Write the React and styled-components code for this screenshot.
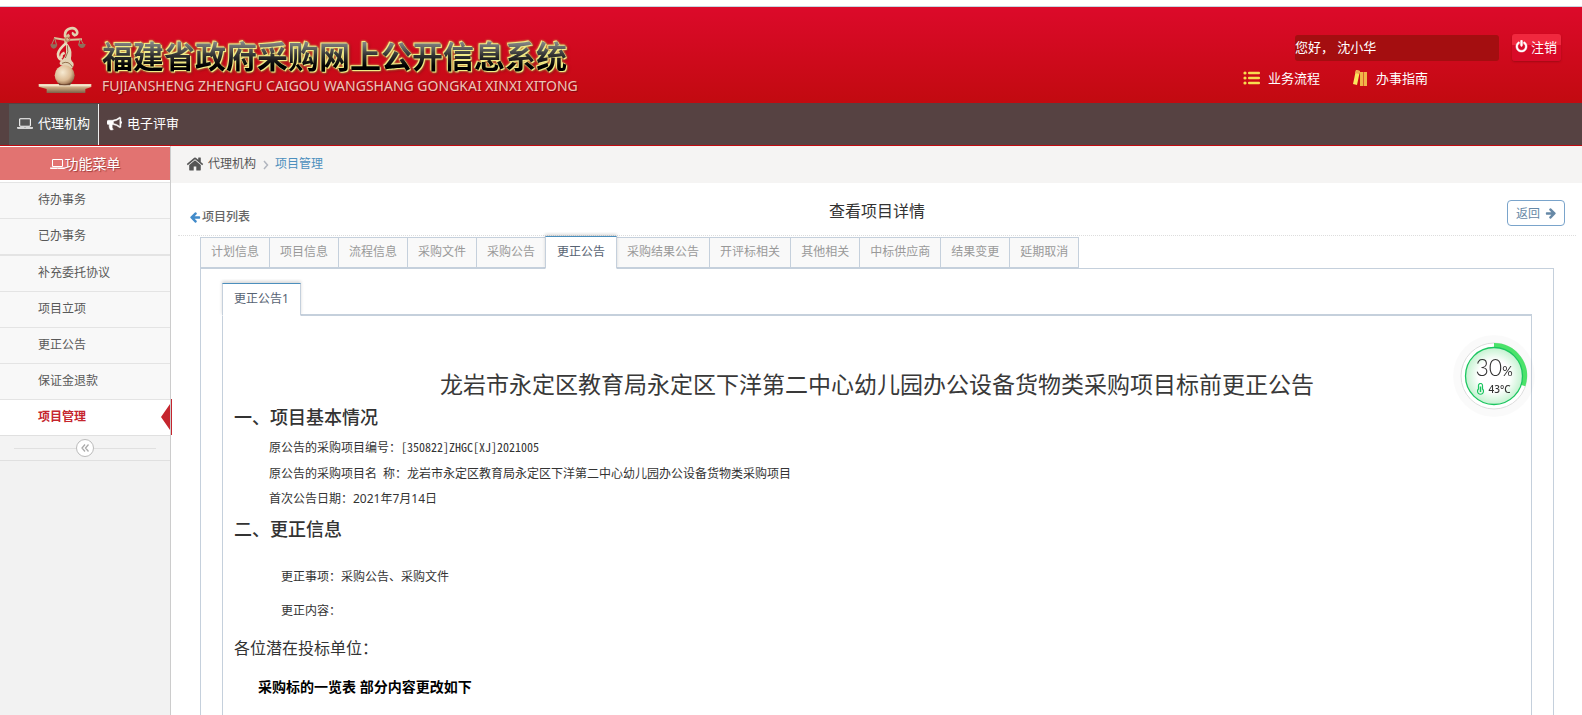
import React from 'react';
import styled, { createGlobalStyle } from 'styled-components';

const GlobalStyle = createGlobalStyle`
  * {
    box-sizing: border-box;
  }

  body {
    margin: 0;
    background: #fff;
    color: #393939;
    font-family: "Noto Sans", "Noto Sans CJK SC", sans-serif;
    font-size: 12px;
    line-height: 20px;
  }

  h1, h2, h3, p, ul {
    margin: 0;
    padding: 0;
    font-weight: normal;
  }

  ul {
    list-style: none;
  }

  a {
    color: inherit;
    text-decoration: none;
  }

  svg {
    display: block;
    flex: none;
  }

  button {
    font-family: inherit;
    cursor: pointer;
  }
`;

const Page = styled.div`
  display: flex;
  flex-direction: column;
  height: 100vh;
  padding-top: 6px;
  overflow: hidden;
`;

/* ---------- header ---------- */

const Header = styled.header`
  display: flex;
  flex: none;
  justify-content: space-between;
  height: 97px;
  padding: 0 21px 0 38px;
  border-top: 1px solid #c9d3e0;
  background: linear-gradient(#dc0a2a, #c20a10);
`;

const Brand = styled.div`
  display: flex;
  gap: 10px;
  padding-top: 19px;
`;

const BrandText = styled.div`
  padding-top: 7px;
`;

const BrandTitle = styled.h1`
  background: linear-gradient(#8a8a8a 20%, #333 50%, #000 75%);
  background-clip: text;
  color: transparent;
  font-family: "Noto Sans CJK SC", sans-serif;
  font-size: 31px;
  font-weight: bold;
  line-height: 44px;
  white-space: nowrap;
  filter: drop-shadow(1px 1px 0 #f0eb88) drop-shadow(-1px -1px 0 #f0eb88) drop-shadow(0 0 1px #e8d868) drop-shadow(1px 1px 1px #8a0a10);
`;

const BrandPinyin = styled.p`
  color: #f0c4b8;
  font-family: "Noto Sans", sans-serif;
  font-size: 14px;
  line-height: 18px;
  text-shadow: 1px 1px 1px #7a0a10;
  white-space: nowrap;
`;

const Account = styled.div`
  width: 318px;
  padding-top: 27px;
  color: #fff;
  font-size: 13px;
`;

const AccountRow = styled.div`
  display: flex;
  justify-content: flex-end;
  gap: 13px;
`;

const Greeting = styled.span`
  width: 204px;
  height: 26px;
  margin-top: 1px;
  border-radius: 3px;
  background: #a40e10;
  line-height: 25px;
`;

const LogoutButton = styled.button`
  display: flex;
  align-items: center;
  gap: 3px;
  height: 27px;
  padding: 0 4px 2px 3px;
  border: 0;
  border-radius: 3px;
  background: linear-gradient(#f0283e 40%, #d80a28 40%);
  box-shadow: 0 1px 2px #a00a14;
  color: #fff;
  font-size: 13px;
`;

const HelpLinks = styled.nav`
  display: flex;
  gap: 33px;
  padding-top: 7px;

  a {
    display: flex;
    align-items: center;
    gap: 8px;
  }
`;

const TopNav = styled.nav`
  display: flex;
  flex: none;
  height: 43px;
  padding: 1px 9px 0;
  border-bottom: 1px solid #c20a10;
  background: #564242;
`;

const TopNavLink = styled.a`
  display: flex;
  align-items: center;
  gap: 5px;
  padding: 0 8px 3px;
  border-right: 1px solid ${(props) => (props.$active ? '#eee' : 'transparent')};
  background: ${(props) => (props.$active ? '#555' : 'none')};
  color: #fff;
  font-size: 13px;
`;

/* ---------- sidebar ---------- */

const Body = styled.div`
  display: flex;
  flex: 1;
  min-height: 0;
`;

const Sidebar = styled.aside`
  flex: none;
  width: 171px;
  border-right: 1px solid #ccc;
  background: #f2f2f2;
`;

const SidebarTitle = styled.h2`
  display: flex;
  align-items: center;
  justify-content: center;
  height: 36px;
  border-top: 1px solid #fff;
  border-bottom: 2px solid #fff;
  background: #e27371;
  color: #fff;
  font-size: 14px;
  text-shadow: 1px 1px 1px #a03c3c;
`;

const MenuItem = styled.li`
  position: relative;
  height: ${(props) => (props.$divided ? 37 : 36)}px;
  padding-left: 38px;
  border-top: ${(props) => (props.$divided ? 2 : 1)}px solid #e4e4e4;
  background: ${(props) => (props.$active ? '#fff' : '#f8f8f8')};
  color: ${(props) => (props.$active ? '#c5262e' : '#585858')};
  font-weight: ${(props) => (props.$active ? 'bold' : 'normal')};
  line-height: 34px;
`;

const ActiveMark = styled.svg`
  position: absolute;
  top: -1px;
  right: -2px;
`;

const CollapseBar = styled.div`
  display: flex;
  align-items: center;
  height: 26px;
  padding: 0 14px;
  border-top: 1px solid #e0e0e0;
  border-bottom: 1px solid #e0e0e0;
  background: #f3f3f3;

  &::before,
  &::after {
    content: "";
    flex: 1;
    height: 1px;
    background: #e0e0e0;
  }
`;

const CollapseButton = styled.button`
  display: flex;
  align-items: center;
  justify-content: center;
  width: 18px;
  height: 18px;
  padding: 0;
  border: 1px solid #bbb;
  border-radius: 50%;
  background: #fff;
  color: #aaa;
`;

/* ---------- content ---------- */

const Main = styled.main`
  display: flex;
  flex: 1;
  flex-direction: column;
  min-width: 0;
`;

const Breadcrumbs = styled.nav`
  display: flex;
  flex: none;
  align-items: center;
  height: 37px;
  padding: 0 15px 1px;
  background: #f5f4f3;
  color: #555;
  gap: 4px;

  a:last-child {
    color: #4c8fbd;
  }
`;

const PageHeader = styled.div`
  display: grid;
  flex: none;
  grid-template-columns: 1fr auto 1fr;
  align-items: start;
  height: 53px;
  margin: 0 6px 0 7px;
  padding: 17px 11px 0;
  border-bottom: 1px dotted #ddd;
`;

const BackLink = styled.a`
  display: flex;
  align-items: center;
  gap: 1px;
  padding-top: 7px;
  color: #666;
  font-weight: 500;
`;

const PageTitle = styled.h2`
  color: #333;
  font-size: 16px;
  line-height: 22px;
`;

const ReturnButton = styled.button`
  display: flex;
  align-items: center;
  gap: 5px;
  justify-self: end;
  height: 26px;
  padding: 0 7px 1px 8px;
  border: 1px solid #7aa4cb;
  border-radius: 4px;
  background: #fff;
  color: #6688a6;
  font-size: 12px;
`;

const Panel = styled.section`
  display: flex;
  flex: 1;
  flex-direction: column;
  min-height: 0;
  margin: ${(props) => (props.$inner ? '14px 21px 0' : '0 28px 0 29px')};
`;

const TabList = styled.div`
  display: flex;
  flex: none;
  align-items: flex-end;
`;

const Tab = styled.button`
  height: 31px;
  margin-right: -1px;
  padding: 0 10px 3px;
  border: 1px solid #c5d0dc;
  background: #f9f9f9;
  color: #999;
  font-size: 12px;

  ${(props) => props.$active && `
    z-index: 1;
    height: 33px;
    margin-bottom: -1px;
    padding: 0 11px 3px;
    border-top-color: #4c8fbd;
    border-bottom-color: #fff;
    background: #fff;
    box-shadow: 0 -2px 3px rgba(0, 0, 0, 0.15);
    color: #576373;
    clip-path: inset(-4px -3px 0);
  `}
`;

const PanelBody = styled.div`
  display: flex;
  flex: 1;
  flex-direction: column;
  min-height: 0;
  margin-top: ${(props) => (props.$inner ? '-1px' : '0')};
  border: solid #c5d0dc;
  border-width: ${(props) => (props.$inner ? '2px' : '1px')} 1px 0;
`;

const Notice = styled.article`
  padding: 53px 11px 0;
  color: #333;
`;

const NoticeTitle = styled.h1`
  color: #393939;
  font-size: 23px;
  line-height: 31px;
  text-align: center;
`;

const SectionTitle = styled.h2`
  padding: 4px 0;
  font-size: 18px;
  font-weight: 500;
  line-height: 26px;
`;

const Field = styled.p`
  padding-left: 35px;
  font-family: ${(props) => (props.$plain ? '"Noto Sans", "Noto Sans CJK SC", sans-serif' : '"Noto Sans Mono CJK SC", "Noto Sans CJK SC", monospace')};
  line-height: 26px;
`;

const Changes = styled.div`
  padding: 13px 0 5px 12px;

  ${Field} {
    line-height: 34px;
  }
`;

const Salutation = styled.p`
  font-size: 16px;
  line-height: 32px;
`;

const TableCaption = styled.h3`
  padding: 7px 0 0 24px;
  color: #000;
  font-size: 14px;
  font-weight: bold;
  line-height: 32px;
`;

/* ---------- floating monitor ---------- */

const Monitor = styled.div`
  position: fixed;
  top: 334px;
  right: 46px;
  width: 84px;
  height: 84px;
  color: #333;
`;

const MonitorFace = styled.div`
  position: absolute;
  inset: 0;
  display: flex;
  flex-direction: column;
  align-items: center;
  justify-content: center;
`;

const Usage = styled.div`
  font-family: Lato, sans-serif;
  font-size: 23px;
  font-weight: 300;
  line-height: 22px;

  span {
    font-size: 13px;
    font-weight: 400;
  }
`;

const Temperature = styled.div`
  display: flex;
  align-items: center;
  gap: 4px;
  font-family: "Noto Sans", sans-serif;
  font-size: 10px;
  font-weight: 500;
  line-height: 14px;
`;

const iconPaths = {
  laptop: 'M416 1280q-66 0-113-47t-47-113v-704q0-66 47-113t113-47h1088q66 0 113 47t47 113v704q0 66-47 113t-113 47h-1088zm-32-864v704q0 13 9.500 22.500t22.500 9.500h1088q13 0 22.500-9.500t9.500-22.500v-704q0-13-9.500-22.500t-22.500-9.500h-1088q-13 0-22.500 9.500t-9.500 22.500zm1376 928h160v96q0 40-47 68t-113 28h-1600q-66 0-113-28t-47-68v-96h1760zm-720 96q16 0 16-16t-16-16h-160q-16 0-16 16t16 16h160z',
  bullhorn: 'M1664 640q53 0 90.500 37.500t37.500 90.500-37.500 90.500-90.500 37.500v384q0 52-38 90t-90 38q-417-347-812-380-58 19-91 66t-31 100.500 40 92.500q-20 33-23 65.500t6 58 33.500 55 48 50 61.500 50.500q-29 58-111.500 83t-168.500 11.500-132-55.500q-7-23-29.500-87.500t-32-94.500-23-89-15-101 3.500-98.500 22-110.500h-122q-66 0-113-47t-47-113v-192q0-66 47-113t113-47h480q435 0 896-384 52 0 90 38t38 90v384zm-128 604v-954q-394 302-768 343v270q377 42 768 341z',
  home: 'M1472 992v480q0 26-19 45t-45 19h-384v-384h-256v384h-384q-26 0-45-19t-19-45v-480q0-1 .5-3t.5-3l575-474 575 474q1 2 1 6zm223-69l-62 74q-8 9-21 11h-3q-13 0-21-7l-692-577-692 577q-12 8-24 7-13-2-21-11l-62-74q-8-10-7-23.500t11-21.500l719-599q32-26 76-26t76 26l244 204v-195q0-14 9-23t23-9h192q14 0 23 9t9 23v408l219 182q10 8 11 21.500t-7 23.500z',
  power: 'M1664 896q0 156-61 298t-164 245-245 164-298 61-298-61-245-164-164-245-61-298q0-182 80.500-343t226.500-270q43-32 95.500-25t83.500 50q32 42 24.500 94.500t-49.500 84.500q-98 74-151.500 181t-53.500 228q0 104 40.500 198.500t109.500 163.500 163.500 109.500 198.500 40.500 198.500-40.500 163.500-109.500 109.500-163.500 40.500-198.500q0-121-53.500-228t-151.500-181q-42-32-49.500-84.500t24.500-94.500q31-43 84-50t95 25q146 109 226.500 270t80.500 343zm-640-768v640q0 52-38 90t-90 38-90-38-38-90v-640q0-52 38-90t90-38 90 38 38 90z',
  arrowLeft: 'M1664 896v128q0 53-32.500 90.500t-84.500 37.500h-704l293 294q38 36 38 90t-38 90l-75 76q-37 37-90 37-52 0-91-37l-651-652q-37-37-37-90 0-52 37-91l651-650q38-38 91-38 52 0 90 38l75 74q38 38 38 91t-38 91l-293 293h704q52 0 84.500 37.500t32.500 90.500z',
};

const Icon = ({ name, size, color = 'currentColor', flip, bold }) => {
  const boxWidth = name === 'laptop' ? 1920 : 1792;
  return (
    <svg
      width={(size * boxWidth) / 1792}
      height={size}
      viewBox={`0 0 ${boxWidth} 1792`}
      fill={color}
      stroke={bold ? color : 'none'}
      strokeWidth="60"
      aria-hidden="true"
    >
      <path d={iconPaths[name]} transform={flip ? 'translate(1792 0) scale(-1 1)' : undefined} />
    </svg>
  );
};

const Statue = () => (
  <svg width="54" height="68" viewBox="24 18 162 204" fill="none" aria-hidden="true">
    <defs>
      <radialGradient id="ball" cx="40%" cy="35%" r="70%">
        <stop offset="0" stopColor="#f6ead2" />
        <stop offset="0.6" stopColor="#dcbb94" />
        <stop offset="1" stopColor="#86593a" />
      </radialGradient>
      <linearGradient id="base" x1="0" y1="0" x2="0" y2="1">
        <stop offset="0" stopColor="#f3e2c4" />
        <stop offset="0.4" stopColor="#c8a880" />
        <stop offset="1" stopColor="#7c6048" />
      </linearGradient>
    </defs>
    <path d="M26 192H184V201L166 207V219H50V207L26 200Z" fill="url(#base)" />
    <path d="M28 194H182V199H28Z" fill="#f5e7cd" />
    <path d="M72 54L108 60L156 58" stroke="#dcc49c" strokeWidth="6" />
    <path d="M106 52Q102 34 116 27Q134 20 141 34Q144 43 134 46Q127 43 130 37" stroke="#e3d2b0" strokeWidth="8" />
    <path d="M118 44Q104 54 108 70" stroke="#d9bf98" strokeWidth="9" />
    <circle cx="113" cy="58" r="6" stroke="#b98d63" strokeWidth="4" />
    <path d="M74 54L64 76M74 54L80 76M150 58L146 76M152 58L162 76" stroke="#a98d70" strokeWidth="3" />
    <path d="M61 73H82Q80 86 71 86Q63 86 61 73ZM144 72H167Q165 84 156 84Q147 84 144 72Z" fill="#8e6f5c" />
    <path d="M108 66Q128 86 124 108Q120 120 130 128Q134 138 124 146L92 136Q84 128 96 120Q108 110 108 96Z" fill="#e3d2b4" />
    <path d="M108 70Q86 88 84 102Q84 116 96 120M104 98Q90 104 96 114" stroke="#ead9bb" strokeWidth="8" />
    <path d="M112 76Q118 96 106 114M96 130Q116 120 128 142" stroke="#93704e" strokeWidth="3" />
    <circle cx="104" cy="166" r="30" fill="url(#ball)" />
    <path d="M84 188Q104 198 126 186L120 196H88Z" fill="#6f4a32" />
  </svg>
);

const ListIcon = () => (
  <svg width="17" height="14" viewBox="0 0 17 14" fill="#f8dc50" aria-hidden="true">
    {[2, 7, 12].map((y) => (
      <g key={y}>
        <circle cx="2" cy={y} r="1.600" />
        <rect x="5" y={y - 1.300} width="12" height="2.600" rx="1" />
      </g>
    ))}
  </svg>
);

const BooksIcon = () => (
  <svg width="15" height="16" viewBox="0 0 15 16" aria-hidden="true">
    <path d="M3 0L7 1L4 15L0 14Z" fill="#fbe65c" />
    <path d="M3 0L7 1L6 4L2 3Z" fill="#f0a850" />
    <path d="M7 2H10V16H7Z" fill="#f0b548" />
    <path d="M10.500 2H14V16H10.500Z" fill="#f0b548" />
  </svg>
);

const Chevron = () => (
  <svg width="11" height="12" viewBox="0 0 11 12" fill="none" stroke="#b2b6bf" strokeWidth="1.500" aria-hidden="true">
    <path d="M4 3L7.500 7L4 11" />
  </svg>
);

const menu = ['待办事务', '已办事务', '补充委托协议', '项目立项', '更正公告', '保证金退款', '项目管理'];

const tabs = [
  '计划信息', '项目信息', '流程信息', '采购文件', '采购公告', '更正公告',
  '采购结果公告', '开评标相关', '其他相关', '中标供应商', '结果变更', '延期取消',
];

const SystemMonitor = () => (
  <Monitor>
    <svg width="84" height="84" viewBox="0 0 84 84" fill="none" aria-hidden="true">
      <defs>
        <radialGradient id="face">
          <stop offset="0.55" stopColor="#fff" />
          <stop offset="1" stopColor="#c4f2d0" />
        </radialGradient>
      </defs>
      <circle cx="42" cy="42" r="41" fill="#000" fillOpacity="0.02" />
      <circle cx="42" cy="42" r="33" fill="#fff" stroke="#ddd" />
      <path d="M42 11.500A30.500 30.500 0 0 1 71 51.400" stroke="#4be36a" strokeWidth="5" />
      <circle cx="42" cy="42" r="28.500" fill="url(#face)" stroke="#1cc660" strokeWidth="1.300" />
    </svg>
    <MonitorFace>
      <Usage>30<span>%</span></Usage>
      <Temperature>
        <svg width="7" height="12" viewBox="0 0 7 12" fill="none" stroke="#1cc660" strokeWidth="1.200" aria-hidden="true">
          <path d="M1.500 6V2.500A2 2 0 0 1 5.500 2.500V6A3 3 0 1 1 1.500 6Z" />
          <path d="M3.500 3.500V9" strokeWidth="1.500" />
        </svg>
        43°C
      </Temperature>
    </MonitorFace>
  </Monitor>
);

const App = () => (
  <Page>
    <GlobalStyle />
    <Header>
      <Brand>
        <Statue />
        <BrandText>
          <BrandTitle>福建省政府采购网上公开信息系统</BrandTitle>
          <BrandPinyin>FUJIANSHENG ZHENGFU CAIGOU WANGSHANG GONGKAI XINXI XITONG</BrandPinyin>
        </BrandText>
      </Brand>
      <Account>
        <AccountRow>
          <Greeting>您好， 沈小华</Greeting>
          <LogoutButton type="button">
            <Icon name="power" size={13} bold />
            注销
          </LogoutButton>
        </AccountRow>
        <HelpLinks>
          <a href="#process"><ListIcon />业务流程</a>
          <a href="#guide"><BooksIcon />办事指南</a>
        </HelpLinks>
      </Account>
    </Header>

    <TopNav>
      <TopNavLink href="#agency" $active>
        <Icon name="laptop" size={15} />
        代理机构
      </TopNavLink>
      <TopNavLink href="#review">
        <Icon name="bullhorn" size={15} bold />
        电子评审
      </TopNavLink>
    </TopNav>

    <Body>
      <Sidebar>
        <SidebarTitle>
          <Icon name="laptop" size={14} />
          功能菜单
        </SidebarTitle>
        <ul>
          {menu.map((label, i) => {
            const active = label === '项目管理';
            return (
              <MenuItem key={label} $active={active} $divided={i === 2}>
                <a href={`#menu-${i}`}>{label}</a>
                {active && (
                  <ActiveMark width="11" height="36" viewBox="0 0 11 36" fill="#c5262e" aria-hidden="true">
                    <path d="M0 18L9 5V31ZM10 0H11V36H10Z" />
                  </ActiveMark>
                )}
              </MenuItem>
            );
          })}
        </ul>
        <CollapseBar>
          <CollapseButton type="button" aria-label="收起菜单">
            <svg width="10" height="10" viewBox="0 0 10 10" fill="none" stroke="currentColor" strokeWidth="1.300">
              <path d="M5 1.500L2 5L5 8.500M8.500 1.500L5.500 5L8.500 8.500" />
            </svg>
          </CollapseButton>
        </CollapseBar>
      </Sidebar>

      <Main>
        <Breadcrumbs>
          <Icon name="home" size={18} />
          <a href="#agency">代理机构</a>
          <Chevron />
          <a href="#projects">项目管理</a>
        </Breadcrumbs>

        <PageHeader>
          <BackLink href="#projects">
            <Icon name="arrowLeft" size={12} color="#428bca" />
            项目列表
          </BackLink>
          <PageTitle>查看项目详情</PageTitle>
          <ReturnButton type="button">
            返回
            <Icon name="arrowLeft" size={12} flip />
          </ReturnButton>
        </PageHeader>

        <Panel>
          <TabList role="tablist">
            {tabs.map((label) => (
              <Tab key={label} type="button" role="tab" $active={label === '更正公告'} aria-selected={label === '更正公告'}>
                {label}
              </Tab>
            ))}
          </TabList>
          <PanelBody>
            <Panel $inner>
              <TabList role="tablist">
                <Tab type="button" role="tab" aria-selected $active>更正公告1</Tab>
              </TabList>
              <PanelBody $inner>
                <Notice>
                  <NoticeTitle>龙岩市永定区教育局永定区下洋第二中心幼儿园办公设备货物类采购项目标前更正公告</NoticeTitle>
                  <SectionTitle>一、项目基本情况</SectionTitle>
                  <Field>原公告的采购项目编号：[350822]ZHGC[XJ]2021005</Field>
                  <Field>原公告的采购项目名 称：龙岩市永定区教育局永定区下洋第二中心幼儿园办公设备货物类采购项目</Field>
                  <Field $plain>首次公告日期：2021年7月14日</Field>
                  <SectionTitle>二、更正信息</SectionTitle>
                  <Changes>
                    <Field>更正事项：采购公告、采购文件</Field>
                    <Field>更正内容：</Field>
                  </Changes>
                  <Salutation>各位潜在投标单位：</Salutation>
                  <TableCaption>采购标的一览表 部分内容更改如下</TableCaption>
                </Notice>
              </PanelBody>
            </Panel>
          </PanelBody>
        </Panel>
      </Main>
    </Body>
    <SystemMonitor />
  </Page>
);

export default App;
